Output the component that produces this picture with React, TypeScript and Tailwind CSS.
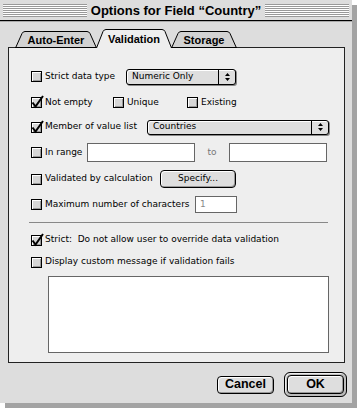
import React from "react";

const sans = "font-['DejaVu_Sans',sans-serif]";
const bold = "font-['Liberation_Sans',Arial,sans-serif] font-bold";

function Checkbox({ checked }: { checked?: boolean }) {
  return (
    <span className="relative h-[11px] w-[11px] shrink-0 border border-black bg-[#d6d6d6] shadow-[inset_1px_1px_0_#fff,inset_-1px_-1px_0_#999]">
      {checked && (
        <svg
          className="absolute left-[-1px] top-[-1px] overflow-visible"
          width="11"
          height="11"
          viewBox="0 0 11 11"
        >
          <path d="M1.5 5.5 L4.5 9.5 L12 -1" fill="none" stroke="#000" strokeWidth="2" />
        </svg>
      )}
    </span>
  );
}

function Check({
  label,
  checked,
  className = "",
}: {
  label: string;
  checked?: boolean;
  className?: string;
}) {
  return (
    <label className={`flex items-center gap-[3px] ${className}`}>
      <Checkbox checked={checked} />
      <span className="whitespace-pre">{label}</span>
    </label>
  );
}

function Popup({ value, className = "" }: { value: string; className?: string }) {
  return (
    <div
      className={`flex items-stretch rounded-[3px] border border-black bg-[#dedede] shadow-[1px_1px_0_#888,inset_1px_1px_0_#fff] ${className}`}
    >
      <span className="flex flex-1 items-center pl-[5px]">{value}</span>
      <span className="flex w-[17px] items-center justify-center border-l border-black">
        <svg width="5" height="8" viewBox="0 0 5 8">
          <path d="M2.5 0 L5 3 H0 Z M0 5 H5 L2.5 8 Z" fill="#000" />
        </svg>
      </span>
    </div>
  );
}

function Field({ className = "", children }: { className?: string; children?: React.ReactNode }) {
  return (
    <div className={`flex items-center border border-[#666] bg-white pl-[4px] text-[#888] ${className}`}>
      {children}
    </div>
  );
}

function Tab({ label, width, active }: { label: string; width: number; active?: boolean }) {
  const h = active ? 19 : 17;
  const w = width;
  const s = 8;
  const outline = `M0.5 ${h} L${s - 1} 2.5 Q${s} 0.5 ${s + 2} 0.5 H${w - s - 2} Q${w - s} 0.5 ${w - s + 1} 2.5 L${w - 0.5} ${h}`;
  return (
    <div
      className={`relative -ml-px flex items-center justify-center pt-[2px] first:ml-0 ${
        active ? "h-[19px]" : "h-[17px]"
      } ${width === 82 ? "w-[82px]" : width === 76 ? "w-[76px]" : "w-[66px]"}`}
    >
      <svg className="absolute inset-0" width={w} height={h} viewBox={`0 0 ${w} ${h}`}>
        <path d={`${outline} Z`} fill={active ? "#eeeeee" : "#d2d2d2"} />
        <path d={active ? outline : `${outline} Z`} fill="none" stroke="#000" strokeWidth="1" />
        {!active && <path d={`M0 ${h - 0.5} H${w}`} stroke="#000" strokeWidth="1" />}
      </svg>
      <span className={`relative ${bold} text-[11px] leading-none`}>{label}</span>
    </div>
  );
}

function Button({ label, className = "" }: { label: string; className?: string }) {
  return (
    <button
      className={`flex items-center justify-center rounded-[4px] border border-black bg-[#dedede] shadow-[inset_1px_1px_0_#fff,inset_-1px_-1px_0_#999] ${className}`}
    >
      {label}
    </button>
  );
}

export default function App() {
  return (
    <div className="h-[411px] w-[361px] bg-white">
      <div className="flex h-[403px] w-[352px] flex-col bg-[#dddddd] shadow-[5px_5px_0_#a3a3a3]">
        {/* Title bar */}
        <div className="flex h-[20px] items-center gap-[4px] px-[3px]">
          <div className="h-[13px] flex-1 bg-[repeating-linear-gradient(#999_0_1px,#fff_1px_2px)]" />
          <span className={`${bold} text-[13px] leading-none`}>Options for Field “Country”</span>
          <div className="h-[13px] flex-1 bg-[repeating-linear-gradient(#999_0_1px,#fff_1px_2px)]" />
        </div>
        <div className="h-px bg-black" />
        <div className="h-px bg-[#aaaaaa]" />

        {/* Tabs */}
        <div className="relative z-10 ml-[15px] mt-[7px] flex h-[19px] items-end">
          <Tab label="Auto-Enter" width={82} />
          <Tab label="Validation" width={76} active />
          <Tab label="Storage" width={66} />
        </div>

        {/* Panel */}
        <div
          className={`-mt-px ml-[8px] flex h-[316px] w-[337px] flex-col border border-[#222] bg-[#eeeeee] pl-[22px] pt-[20px] text-[9px] text-black ${sans}`}
        >
          <div className="flex h-[17px] items-center">
            <Check label="Strict data type" className="w-[95px]" />
            <Popup value="Numeric Only" className="h-[16px] w-[110px]" />
          </div>

          <div className="mt-[9px] flex h-[17px] items-center">
            <Check label="Not empty" checked className="w-[82px]" />
            <Check label="Unique" className="w-[74px]" />
            <Check label="Existing" />
          </div>

          <div className="mt-[8px] flex h-[16px] items-center">
            <Check label="Member of value list" checked className="w-[116px]" />
            <Popup value="Countries" className="h-[15px] w-[182px]" />
          </div>

          <div className="mt-[8px] flex h-[19px] items-center">
            <Check label="In range" className="w-[56px]" />
            <Field className="h-[19px] w-[108px]" />
            <span className="w-[34px] text-center text-[#777]">to</span>
            <Field className="h-[19px] w-[98px]" />
          </div>

          <div className="mt-[8px] flex h-[18px] items-center">
            <Check label="Validated by calculation" className="w-[129px]" />
            <Button label="Specify..." className="h-[18px] w-[76px] rounded-[3px] shadow-[1px_1px_0_#888,inset_1px_1px_0_#fff]" />
          </div>

          <div className="mt-[8px] flex h-[17px] items-center">
            <Check label="Maximum number of characters" className="w-[164px]" />
            <Field className="h-[17px] w-[42px]">1</Field>
          </div>

          <div className="ml-[-2px] mt-[9px] h-px w-[299px] bg-[#888888]" />

          <div className="mt-[9px] flex h-[16px] items-center">
            <Check label="Strict:  Do not allow user to override data validation" checked />
          </div>

          <div className="mt-[6px] flex h-[16px] items-center">
            <Check label="Display custom message if validation fails" />
          </div>

          <div className="ml-[17px] mt-[6px] h-[77px] w-[281px] border border-[#666] bg-white" />
        </div>

        {/* Buttons */}
        <div className={`mt-[9px] flex items-center justify-end gap-[10px] pr-[5px] ${bold} text-[12.5px]`}>
          <Button label="Cancel" className="h-[18px] w-[57px]" />
          <div className="rounded-[6px] border border-black bg-[#bcbcbc] p-[2px] shadow-[inset_1px_1px_0_#eee]">
            <Button label="OK" className="h-[19px] w-[57px]" />
          </div>
        </div>
      </div>
    </div>
  );
}
